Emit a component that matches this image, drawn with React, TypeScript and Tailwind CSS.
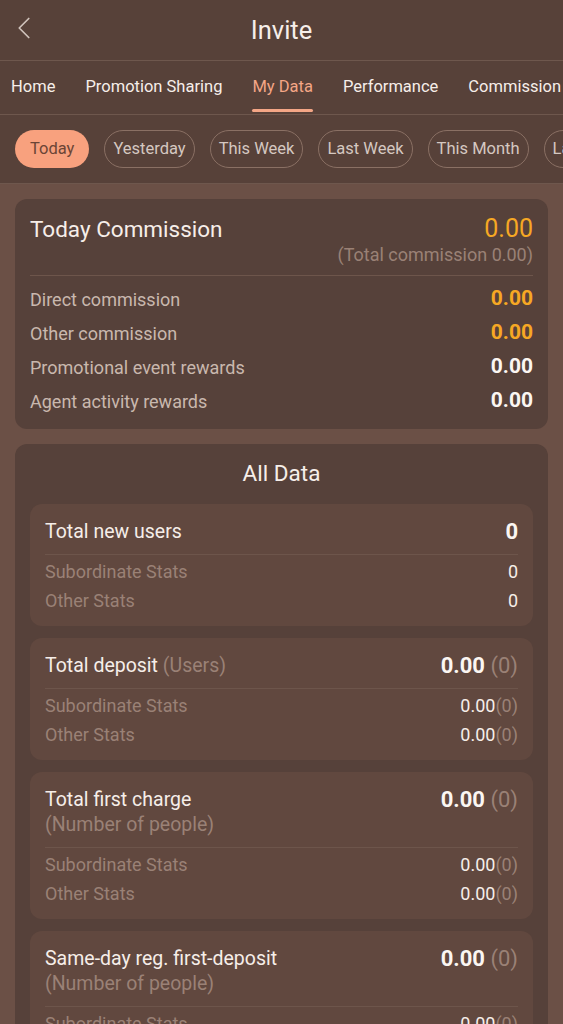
import { ChevronLeft } from 'lucide-react';

const tabs = ['Home', 'Promotion Sharing', 'My Data', 'Performance', 'Commission'];
const pills = ['Today', 'Yesterday', 'This Week', 'Last Week', 'This Month', 'Last Month'];

const commissionRows = [
  { label: 'Direct commission', value: '0.00', gold: true },
  { label: 'Other commission', value: '0.00', gold: true },
  { label: 'Promotional event rewards', value: '0.00', gold: false },
  { label: 'Agent activity rewards', value: '0.00', gold: false },
];

type Stat = {
  title: string;
  suffix?: string;
  subtitle?: string;
  value: string;
  count?: boolean;
};

const stats: Stat[] = [
  { title: 'Total new users', value: '0' },
  { title: 'Total deposit', suffix: '(Users)', value: '0.00', count: true },
  { title: 'Total first charge', subtitle: '(Number of people)', value: '0.00', count: true },
  { title: 'Same-day reg. first-deposit', subtitle: '(Number of people)', value: '0.00', count: true },
];

function StatCard({ stat }: { stat: Stat }) {
  const small = stat.count ? '0.00' : '0';
  return (
    <div className="rounded-xl bg-[#61483f] px-[15px] pt-[15px] pb-[11px]">
      <div className="flex justify-between items-start pb-[10px] border-b border-[#6d554b]">
        <div className="leading-[25px]">
          <div className="text-[19.5px] text-[#f6eee9]">
            {stat.title}
            {stat.suffix && <span className="text-[#9a8176]"> {stat.suffix}</span>}
          </div>
          {stat.subtitle && <div className="text-[19.5px] text-[#9a8176]">{stat.subtitle}</div>}
        </div>
        <div className="text-[22px] leading-[25px] font-bold text-[#fbf6f2] whitespace-nowrap">
          {stat.value}
          {stat.count && <span className="font-normal text-[#9a8176]"> (0)</span>}
        </div>
      </div>
      <div className="pt-[2px]">
        {['Subordinate Stats', 'Other Stats'].map((l) => (
          <div key={l} className="flex justify-between h-[29px] items-center text-[18px]">
            <span className="text-[#9a8176]">{l}</span>
            <span className="text-[#f6eee9]">
              {small}
              {stat.count && <span className="text-[#9a8176]">(0)</span>}
            </span>
          </div>
        ))}
      </div>
    </div>
  );
}

export default function App() {
  return (
    <div
      className="w-[563px] h-[1024px] overflow-hidden bg-[#6b5046] text-white"
      style={{ fontFamily: 'Roboto, "Noto Sans", sans-serif' }}
    >
      <div className="bg-[#574139] border-b border-[#6e574d]">
        <div className="relative h-[61px] flex items-center justify-center border-b border-[#6e574d]">
          <ChevronLeft
            className="absolute left-[5px] top-[9px] w-[38px] h-[38px] text-[#cfc2bb]"
            strokeWidth={1.1}
          />
          <h1 className="text-[25.5px] text-[#f6eee9]">Invite</h1>
        </div>
        <div className="flex h-[54px] gap-[30px] pl-[11px] whitespace-nowrap overflow-hidden border-b border-[#6e574d]">
          {tabs.map((t) => (
            <div
              key={t}
              className={`relative flex items-center text-[16.5px] ${
                t === 'My Data' ? 'text-[#f4a686]' : 'text-[#f6eee9]'
              }`}
            >
              {t}
              {t === 'My Data' && (
                <div className="absolute left-0 right-0 bottom-[2px] h-[3px] rounded-full bg-[#f4a686]" />
              )}
            </div>
          ))}
        </div>
        <div className="flex h-[68px] items-center gap-[15px] pl-[15px] whitespace-nowrap overflow-hidden">
          {pills.map((p) => (
            <div
              key={p}
              className={`h-[38px] rounded-full flex items-center text-[16.5px] shrink-0 ${
                p === 'Today'
                  ? 'px-[15px] bg-[#f8a17e] text-[#6b4536]'
                  : 'px-[8px] border border-[#8a7064] text-[#d5c8c1]'
              }`}
            >
              {p}
            </div>
          ))}
        </div>
      </div>

      <div className="px-[15px] pt-[15px] flex flex-col gap-[15px]">
        <div className="rounded-xl bg-[#56413a] px-[15px] pt-[15px] pb-[11px]">
          <div className="flex justify-between items-start border-b border-[#6d554b] pb-[9px]">
            <div className="text-[22.5px] leading-[30px] text-[#f6eee9]">Today Commission</div>
            <div className="text-right">
              <div className="text-[25px] leading-[30px] text-[#f6a824]">0.00</div>
              <div className="text-[18px] leading-[22px] text-[#9a8176]">(Total commission 0.00)</div>
            </div>
          </div>
          <div className="pt-[6px]">
            {commissionRows.map((r) => (
              <div key={r.label} className="flex justify-between items-center h-[34px]">
                <span className="text-[18px] text-[#c9b8ae]">{r.label}</span>
                <span className={`text-[21px] font-bold ${r.gold ? 'text-[#f6a824]' : 'text-[#fbf6f2]'}`}>
                  {r.value}
                </span>
              </div>
            ))}
          </div>
        </div>

        <div className="rounded-xl bg-[#56413a] px-[15px] pb-[15px]">
          <div className="h-[60px] flex items-center justify-center text-[22.5px] text-[#f6eee9]">All Data</div>
          <div className="flex flex-col gap-[12px]">
            {stats.map((s) => (
              <StatCard key={s.title} stat={s} />
            ))}
          </div>
        </div>
      </div>
    </div>
  );
}
